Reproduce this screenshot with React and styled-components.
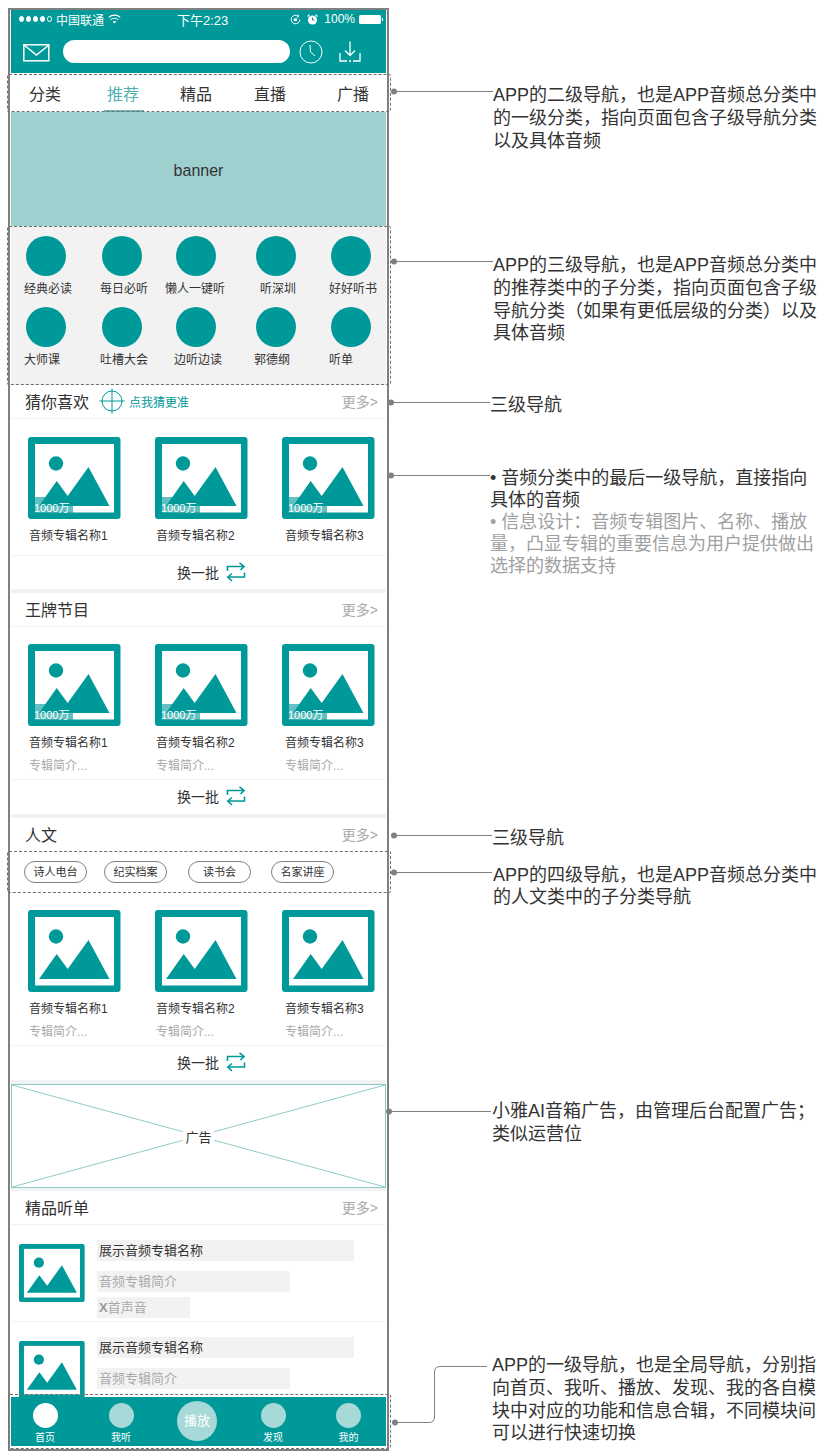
import React from 'react'
import styled, { createGlobalStyle } from 'styled-components'

const TEAL = '#009999'
const PALE = '#a6d9d8'
const GREY = '#f2f2f2'
const LINE = '#808080'

const Global = createGlobalStyle`
  html, body { margin: 0; padding: 0; background: #fff; }
  body {
    font-family: "Liberation Sans", "Noto Sans CJK SC", sans-serif;
    color: #333;
  }
`

const Canvas = styled.div`
  position: relative;
  width: 825px;
  height: 1453px;
  overflow: hidden;
  padding: 8px 0 0 8px;
  box-sizing: border-box;
`

const Phone = styled.div`
  width: 381px;
  box-sizing: border-box;
  border: 2px solid ${LINE};
  padding: 0 1px 3px;
  background: #fff;
`

/* top bar */
const TopBar = styled.div`
  height: 63px;
  background: ${TEAL};
  color: #fff;
`
const StatusBar = styled.div`
  height: 18px;
  box-sizing: border-box;
  padding: 0 5px 0 8px;
  display: flex;
  align-items: center;
  font-size: 12px;
`
const StatusLeft = styled.div`
  width: 158px;
  display: flex;
  align-items: center;
  gap: 4px;
`
const Dots = styled.span`
  display: flex;
  gap: 1.5px;
`
const Dot = styled.i`
  width: 5.4px;
  height: 5.4px;
  box-sizing: border-box;
  border-radius: 50%;
  border: 1px solid #fff;
  background: ${p => (p.$off ? 'transparent' : '#fff')};
`
const StatusTime = styled.span`
  font-size: 13px;
  white-space: nowrap;
`
const StatusRight = styled.div`
  margin-left: auto;
  display: flex;
  align-items: center;
  gap: 6px;
`
const Battery = styled.span`
  display: block;
  width: 22px;
  height: 9px;
  background: #fff;
  border-radius: 1.5px;
  margin-left: -2px;
  position: relative;
  &::after {
    content: '';
    position: absolute;
    right: -2px;
    top: 3px;
    width: 1.5px;
    height: 3px;
    background: #fff;
  }
`
const SearchRow = styled.div`
  height: 45px;
  display: flex;
  align-items: flex-start;
  padding: 12px 0 0 12px;
  box-sizing: border-box;
`
const SearchPill = styled.div`
  width: 227px;
  height: 23px;
  margin-left: 13px;
  background: #fff;
  border-radius: 11.5px;
`

/* second level tabs */
const Tabs = styled.div`
  height: 39px;
  display: flex;
  padding-left: 18px;
  box-sizing: border-box;
`
const Tab = styled.div`
  position: relative;
  height: 39px;
  margin-left: ${p => p.$left}px;
  font-size: 16px;
  line-height: 43px;
  white-space: nowrap;
  color: ${p => (p.$active ? '#4fb3b0' : '#333')};
  ${p => p.$active && `
    &::after {
      content: '';
      position: absolute;
      left: -3px;
      right: -5px;
      bottom: 0;
      height: 2px;
      background: #6fbab8;
    }
  `}
`
const Banner = styled.div`
  height: 114px;
  background: #9fd0d0;
  display: flex;
  align-items: center;
  justify-content: center;
  font-size: 16px;
  padding-top: 4px;
  box-sizing: border-box;
`

/* third level round entries */
const Entries = styled.div`
  height: 159px;
  box-sizing: border-box;
  background: ${GREY};
  padding: 10px 0 0 15px;
  display: grid;
  grid-template-columns: 76px 74px 80px 75px 55px;
  grid-auto-rows: 71px;
`
const Entry = styled.div`
  width: 40px;
`
const EntryDisc = styled.div`
  width: 40px;
  height: 40px;
  border-radius: 50%;
  background: ${TEAL};
`
const EntryLabel = styled.div`
  margin: 5px 0 0 ${p => p.$dx}px;
  font-size: 12px;
  line-height: 16px;
  white-space: nowrap;
`

/* section heads */
const SectionHead = styled.div`
  height: ${p => (p.$flat ? 33 : 34)}px;
  box-sizing: border-box;
  display: flex;
  align-items: center;
  padding: 0 8px 1px 14px;
  border-bottom: ${p => (p.$flat ? 'none' : `1px solid ${GREY}`)};
`
const SectionTitle = styled.div`
  font-size: 16px;
`
const Guess = styled.div`
  margin-left: 10px;
  display: flex;
  align-items: center;
  gap: 4px;
  color: ${TEAL};
  font-size: 12px;
`
const More = styled.div`
  margin-left: auto;
  font-size: 14px;
  color: #aaa;
`

/* album grids */
const Albums = styled.div`
  display: grid;
  grid-template-columns: repeat(3, 127px);
  padding: ${p => p.$top}px 0 ${p => p.$bottom}px 17px;
  border-bottom: 1px solid ${GREY};
`
const Cover = styled.div`
  position: relative;
  width: 93px;
  height: 82px;
`
const CoverCount = styled.div`
  position: absolute;
  left: 7px;
  bottom: 6px;
  width: 38px;
  height: 16px;
  background: rgba(0, 153, 153, 0.62);
  color: #fff;
  font-size: 11px;
  line-height: 22px;
  text-indent: -1px;
  white-space: nowrap;
`
const AlbumName = styled.div`
  margin: 9px 0 0 ${p => p.$dx}px;
  font-size: 12px;
  line-height: 16px;
  white-space: nowrap;
`
const AlbumIntro = styled.div`
  margin: 7px 0 0 ${p => p.$dx}px;
  font-size: 12px;
  line-height: 16px;
  color: #aaa;
`
const Refresh = styled.div`
  height: ${p => p.$h}px;
  box-sizing: border-box;
  display: flex;
  align-items: center;
  padding: 0 0 2px 166px;
  gap: 7px;
  font-size: 14px;
`
const Gap = styled.div`
  height: ${p => p.$h}px;
  background: ${GREY};
`

/* fourth level chips */
const Chips = styled.div`
  height: 41px;
  box-sizing: border-box;
  padding: 10px 0 0 13px;
  display: flex;
`
const Chip = styled.div`
  width: 63px;
  height: 22px;
  box-sizing: border-box;
  margin-right: ${p => p.$gap}px;
  border: 1px solid ${LINE};
  border-radius: 11px;
  font-size: 11px;
  line-height: 20px;
  text-align: center;
  white-space: nowrap;
`

/* ad slot */
const AdSlot = styled.div`
  position: relative;
  height: 104px;
  box-sizing: border-box;
  border: 1px solid #8ecbc8;
  padding-top: 3px;
  display: flex;
  align-items: center;
  justify-content: center;
`
const AdCross = styled.svg`
  position: absolute;
  inset: 0;
  width: 100%;
  height: 100%;
`
const AdLabel = styled.span`
  position: relative;
  background: #fff;
  padding: 0 2px;
  font-size: 13px;
  line-height: 18px;
`

/* list rows */
const ListRow = styled.div`
  height: ${p => p.$h}px;
  box-sizing: border-box;
  overflow: hidden;
  display: flex;
  padding: ${p => p.$top}px 0 0 8px;
  border-bottom: ${p => (p.$open ? 'none' : `1px solid ${GREY}`)};
`
const ListThumb = styled.div`
  width: 66px;
  height: 60px;
  margin: 3px 0 0 0;
  flex: none;
`
const ListText = styled.div`
  margin-left: 12px;
  display: flex;
  flex-direction: column;
`
const ListBar = styled.div`
  width: ${p => p.$w}px;
  height: 21px;
  margin-top: ${p => p.$mt}px;
  padding-left: 2px;
  box-sizing: border-box;
  background: ${GREY};
  color: ${p => (p.$muted ? '#aaa' : '#333')};
  font-size: 13px;
  line-height: 21px;
  b { color: #999; }
`

/* bottom nav */
const BottomNav = styled.div`
  height: 49px;
  background: ${TEAL};
  position: relative;
  display: grid;
  grid-template-columns: 72px 76px 76px 76px 75px;
`
const NavItem = styled.div`
  display: flex;
  flex-direction: column;
  align-items: center;
  padding: 6px ${p => p.$right || 0}px 0 0;
  color: #fff;
  font-size: 10px;
  line-height: 14px;
`
const NavDisc = styled.div`
  width: 25px;
  height: 25px;
  border-radius: 50%;
  background: ${p => (p.$on ? '#fff' : PALE)};
  margin-bottom: 3px;
`
const PlayDisc = styled.div`
  width: 40px;
  height: 40px;
  margin-top: -2px;
  border-radius: 50%;
  background: ${PALE};
  color: #fff;
  font-size: 13px;
  line-height: 40px;
  text-align: center;
`

/* annotation layer */
const Wire = styled.svg`
  position: absolute;
  left: 0;
  top: 0;
  pointer-events: none;
`
const Dashed = styled.div`
  position: absolute;
  left: ${p => p.$x}px;
  top: ${p => p.$y}px;
  width: ${p => p.$w}px;
  height: ${p => p.$h}px;
  box-sizing: border-box;
  border: 1px dashed #6f6f6f;
  border-radius: 2px;
`
const Note = styled.div`
  position: absolute;
  left: ${p => p.$x}px;
  top: ${p => p.$y}px;
  font-size: 18px;
  line-height: ${p => p.$lh}px;
  white-space: nowrap;
  color: #333;
`
const NoteMuted = styled.div`
  color: #a0a0a0;
`

const CoverArt = () => (
  <svg width="100%" height="100%" viewBox="0 0 93 82">
    <rect width="92.5" height="82" rx="3" fill={TEAL} />
    <rect x="7" y="7" width="79" height="68.5" fill="#fff" />
    <circle cx="28" cy="26.5" r="7.2" fill={TEAL} />
    <path d="M11 69 L28.7 44 L39.7 59 L60.5 30 L81.5 69 Z" fill={TEAL} />
  </svg>
)

const MailIcon = () => (
  <svg width="27" height="18" viewBox="0 0 27 18" fill="none" stroke="#fff" strokeWidth="1.5" style={{ marginTop: 4 }}>
    <rect x="0.8" y="0.8" width="25" height="16" />
    <path d="M1 1 L13.4 11 L26 1" />
  </svg>
)

const ClockIcon = () => (
  <svg width="24" height="24" viewBox="0 0 24 24" fill="none" stroke="#fff" strokeWidth="1" style={{ marginLeft: 9 }}>
    <circle cx="12" cy="12" r="11" />
    <path d="M11 5 L11.5 12 L16 16" />
  </svg>
)

const SaveIcon = () => (
  <svg width="22" height="22" viewBox="0 0 22 22" fill="none" stroke="#fff" strokeWidth="1.3" style={{ marginLeft: 16, marginTop: 1 }}>
    <path d="M11 0.5 V14 M6 9.5 L11 14.5 L16 9.5" />
    <path d="M1 12 V20 H8 M14 20 H21 V12 M10 20 H12" />
  </svg>
)

const WifiIcon = () => (
  <svg width="13" height="10" viewBox="0 0 13 10" fill="none" stroke="#fff" strokeWidth="1.2">
    <path d="M0.8 3.4 C4 0.4 9 0.4 12.2 3.4 M2.8 5.6 C4.8 3.8 8.2 3.8 10.2 5.6" />
    <path d="M6.5 9.5 L4.6 7.5 C5.6 6.7 7.4 6.7 8.4 7.5 Z" fill="#fff" stroke="none" />
  </svg>
)

const LockIcon = () => (
  <svg width="11" height="11" viewBox="0 0 11 11" fill="none" stroke="#fff">
    <path d="M9.8 5.5 A4.3 4.3 0 1 1 8.4 2.3" />
    <path d="M8.6 0.8 V3 H6.6" strokeWidth="0.8" />
    <rect x="3.8" y="4.4" width="3.2" height="2.6" fill="#fff" stroke="none" />
  </svg>
)

const AlarmIcon = () => (
  <svg width="11" height="11" viewBox="0 0 11 11">
    <circle cx="5.5" cy="6" r="4.6" fill="#fff" />
    <path d="M5.5 3.5 V6 H7.5" stroke={TEAL} fill="none" />
    <path d="M0.5 2.5 L2.5 0.6 M10.5 2.5 L8.5 0.6" stroke="#fff" strokeWidth="1.2" />
  </svg>
)

const TargetIcon = () => (
  <svg width="26" height="26" viewBox="0 0 26 26" fill="none" stroke={TEAL} strokeWidth="1">
    <circle cx="13" cy="13" r="10" />
    <path d="M13 0.5 V25.5 M0.5 13 H25.5" />
  </svg>
)

const SwapIcon = () => (
  <svg width="20" height="20" viewBox="0 0 20 20" fill="none" stroke={TEAL} strokeWidth="1.6">
    <path d="M1.5 9 V4.5 H18" />
    <path d="M13.5 0.8 L18 4.5 L14.5 8" />
    <path d="M18.5 10.5 V15 H2" />
    <path d="M6 11.5 L1.8 15 L6 19" />
  </svg>
)

const tabs = [
  { name: '分类', left: 0 },
  { name: '推荐', left: 46, active: true },
  { name: '精品', left: 41 },
  { name: '直播', left: 42 },
  { name: '广播', left: 51 },
]

const entries = [
  ['经典必读', -2], ['每日必听', -2], ['懒人一键听', -11], ['听深圳', 4], ['好好听书', -2],
  ['大师课', -2], ['吐槽大会', -2], ['边听边读', -2], ['郭德纲', -2], ['听单', -2],
]

const dx = [1, 1, 3]

const AlbumGrid = ({ top, bottom, count, intro }) => (
  <Albums $top={top} $bottom={bottom}>
    {[1, 2, 3].map((n, i) => (
      <div key={n}>
        <Cover>
          <CoverArt />
          {count && <CoverCount>1000万</CoverCount>}
        </Cover>
        <AlbumName $dx={dx[i]}>音频专辑名称{n}</AlbumName>
        {intro && <AlbumIntro $dx={dx[i]}>专辑简介...</AlbumIntro>}
      </div>
    ))}
  </Albums>
)

const Head = ({ title, flat, children }) => (
  <SectionHead $flat={flat}>
    <SectionTitle>{title}</SectionTitle>
    {children}
    <More>更多&gt;</More>
  </SectionHead>
)

const Again = ({ h }) => (
  <Refresh $h={h}>
    换一批
    <SwapIcon />
  </Refresh>
)

const connectors = [
  [394, 91, 493],
  [394, 261, 493],
  [391, 402, 490],
  [391, 475, 490],
  [394, 835, 492],
  [394, 872, 492],
  [389, 1111, 491],
]

const notes = [
  { x: 493, y: 84, lh: 22.8, lines: ['APP的二级导航，也是APP音频总分类中', '的一级分类，指向页面包含子级导航分类', '以及具体音频'] },
  { x: 493, y: 254, lh: 22.8, lines: ['APP的三级导航，也是APP音频总分类中', '的推荐类中的子分类，指向页面包含子级', '导航分类（如果有更低层级的分类）以及', '具体音频'] },
  { x: 490, y: 394, lh: 22.8, lines: ['三级导航'] },
  { x: 490, y: 467, lh: 22, lines: ['• 音频分类中的最后一级导航，直接指向', '具体的音频'], muted: ['• 信息设计：音频专辑图片、名称、播放', '量，凸显专辑的重要信息为用户提供做出', '选择的数据支持'] },
  { x: 492, y: 827, lh: 22.8, lines: ['三级导航'] },
  { x: 493, y: 864, lh: 22, lines: ['APP的四级导航，也是APP音频总分类中', '的人文类中的子分类导航'] },
  { x: 492, y: 1100, lh: 22.8, lines: ['小雅AI音箱广告，由管理后台配置广告；', '类似运营位'] },
  { x: 492, y: 1354, lh: 22.8, lines: ['APP的一级导航，也是全局导航，分别指', '向首页、我听、播放、发现、我的各自模', '块中对应的功能和信息合辑，不同模块间', '可以进行快速切换'] },
]

export default function App() {
  return (
    <Canvas>
      <Global />
      <Phone>
        <TopBar>
          <StatusBar>
            <StatusLeft>
              <Dots>
                <Dot /><Dot /><Dot /><Dot /><Dot $off />
              </Dots>
              <span>中国联通</span>
              <WifiIcon />
            </StatusLeft>
            <StatusTime>下午2:23</StatusTime>
            <StatusRight>
              <LockIcon />
              <AlarmIcon />
              <span>100%</span>
              <Battery />
            </StatusRight>
          </StatusBar>
          <SearchRow>
            <MailIcon />
            <SearchPill />
            <ClockIcon />
            <SaveIcon />
          </SearchRow>
        </TopBar>

        <Tabs>
          {tabs.map(t => (
            <Tab key={t.name} $left={t.left} $active={t.active}>{t.name}</Tab>
          ))}
        </Tabs>
        <Banner>banner</Banner>

        <Entries>
          {entries.map(([name, off]) => (
            <Entry key={name}>
              <EntryDisc />
              <EntryLabel $dx={off}>{name}</EntryLabel>
            </Entry>
          ))}
        </Entries>

        <Head title="猜你喜欢">
          <Guess>
            <TargetIcon />
            点我猜更准
          </Guess>
        </Head>
        <AlbumGrid top={18} bottom={11} count />
        <Again h={33} />
        <Gap $h={4} />

        <Head title="王牌节目" />
        <AlbumGrid top={17} bottom={5} count intro />
        <Again h={34} />
        <Gap $h={4} />

        <Head title="人文" flat />
        <Chips>
          <Chip $gap={17}>诗人电台</Chip>
          <Chip $gap={21}>纪实档案</Chip>
          <Chip $gap={20}>读书会</Chip>
          <Chip $gap={0}>名家讲座</Chip>
        </Chips>
        <AlbumGrid top={18} bottom={5} intro />
        <Again h={34} />
        <Gap $h={4} />

        <AdSlot>
          <AdCross viewBox="0 0 373 102" preserveAspectRatio="none">
            <path d="M0 0 L373 102 M373 0 L0 102" stroke="#8ecbc8" strokeWidth="1" fill="none" />
          </AdCross>
          <AdLabel>广告</AdLabel>
        </AdSlot>
        <Gap $h={3} />

        <Head title="精品听单" />
        <ListRow $h={97} $top={15}>
          <ListThumb><CoverArt /></ListThumb>
          <ListText>
            <ListBar $w={257} $mt={0}>展示音频专辑名称</ListBar>
            <ListBar $w={193} $mt={10} $muted>音频专辑简介</ListBar>
            <ListBar $w={93} $mt={5} $muted><b>X</b>首声音</ListBar>
          </ListText>
        </ListRow>
        <ListRow $h={75} $top={15} $open>
          <ListThumb><CoverArt /></ListThumb>
          <ListText>
            <ListBar $w={257} $mt={0}>展示音频专辑名称</ListBar>
            <ListBar $w={193} $mt={10} $muted>音频专辑简介</ListBar>
          </ListText>
        </ListRow>

        <BottomNav>
          <NavItem $right={4}>
            <NavDisc $on />
            首页
          </NavItem>
          <NavItem>
            <NavDisc />
            我听
          </NavItem>
          <NavItem>
            <PlayDisc>播放</PlayDisc>
          </NavItem>
          <NavItem>
            <NavDisc />
            发现
          </NavItem>
          <NavItem>
            <NavDisc />
            我的
          </NavItem>
        </BottomNav>
      </Phone>

      <Dashed $x={7} $y={74} $w={384} $h={38} />
      <Dashed $x={7} $y={226} $w={384} $h={159} />
      <Dashed $x={7} $y={851} $w={384} $h={42} />
      <Dashed $x={8} $y={1394} $w={383} $h={55} />

      <Wire width="825" height="1453" viewBox="0 0 825 1453" fill="none" stroke={LINE}>
        {connectors.map(([x, y, to]) => (
          <g key={y}>
            <path d={`M${x} ${y + 0.5} H${to}`} />
            <circle cx={x} cy={y + 0.5} r="3" fill={LINE} stroke="none" />
          </g>
        ))}
        <path d="M395 1422.5 H429 Q434.5 1422.5 434.5 1417 V1372 Q434.5 1366.5 440 1366.5 H487" />
        <circle cx="395" cy="1422.5" r="3" fill={LINE} stroke="none" />
      </Wire>

      {notes.map(n => (
        <Note key={n.y} $x={n.x} $y={n.y} $lh={n.lh}>
          {n.lines.map(l => <div key={l}>{l}</div>)}
          {n.muted && (
            <NoteMuted>
              {n.muted.map(l => <div key={l}>{l}</div>)}
            </NoteMuted>
          )}
        </Note>
      ))}
    </Canvas>
  )
}
